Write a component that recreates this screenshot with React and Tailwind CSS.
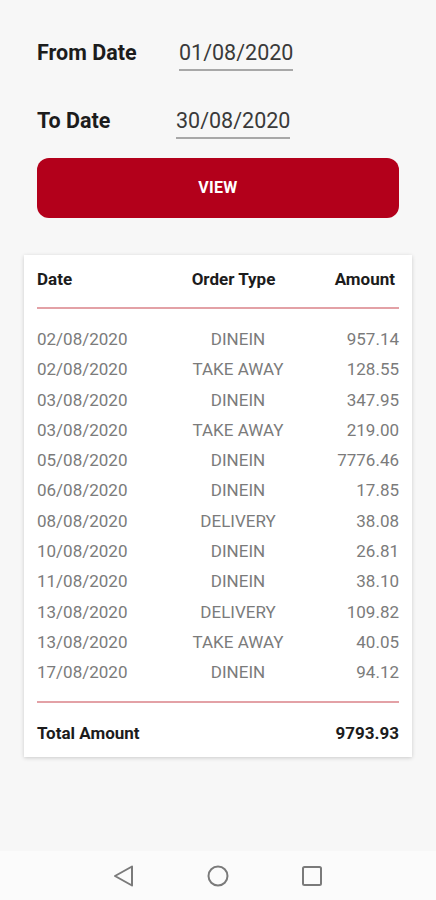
import React from "react";

const rows = [
  { date: "02/08/2020", type: "DINEIN", amount: "957.14" },
  { date: "02/08/2020", type: "TAKE AWAY", amount: "128.55" },
  { date: "03/08/2020", type: "DINEIN", amount: "347.95" },
  { date: "03/08/2020", type: "TAKE AWAY", amount: "219.00" },
  { date: "05/08/2020", type: "DINEIN", amount: "7776.46" },
  { date: "06/08/2020", type: "DINEIN", amount: "17.85" },
  { date: "08/08/2020", type: "DELIVERY", amount: "38.08" },
  { date: "10/08/2020", type: "DINEIN", amount: "26.81" },
  { date: "11/08/2020", type: "DINEIN", amount: "38.10" },
  { date: "13/08/2020", type: "DELIVERY", amount: "109.82" },
  { date: "13/08/2020", type: "TAKE AWAY", amount: "40.05" },
  { date: "17/08/2020", type: "DINEIN", amount: "94.12" },
];

const DateRow = ({ label, value, labelWidth, className }) => (
  <div className={`flex items-baseline ${className}`}>
    <span className={`${labelWidth} text-[21.5px] font-bold text-[#1c1c1c] leading-[26px]`}>{label}</span>
    <span className="text-[21.5px] text-[#3a3a3a] leading-[26px] pb-[3px] border-b-2 border-[#a8a8a8]">
      {value}
    </span>
  </div>
);

const App = () => {
  return (
    <div className="w-full min-h-[900px] bg-[#f7f7f7] flex flex-col font-['Roboto',sans-serif]">
      <div className="flex-1">
        <div className="px-[37px]">
          <DateRow label="From Date" value="01/08/2020" labelWidth="w-[142px]" className="pt-[40px]" />
          <DateRow label="To Date" value="30/08/2020" labelWidth="w-[139px]" className="mt-[37px]" />

          <button className="mt-[19px] w-full h-[60px] rounded-[12px] bg-[#b3001b] text-white text-[16px] font-bold tracking-[0.3px]">
            VIEW
          </button>
        </div>

        <div className="mx-[24px] mt-[37px] bg-white shadow-[0_1px_4px_rgba(0,0,0,0.18)] px-[13px] pt-[14px] pb-[14px]">
          <div className="grid grid-cols-[130px_1fr_90px] text-[17px] font-bold text-[#1c1c1c] leading-[20px]">
            <span>Date</span>
            <span className="text-center pr-[9px]">Order Type</span>
            <span className="text-right pr-[4px]">Amount</span>
          </div>

          <div className="mt-[18px] h-[2px] bg-[#e3a1a6]"></div>

          <div className="mt-[15px]">
            {rows.map((row, index) => (
              <div
                key={index}
                className="grid grid-cols-[130px_1fr_90px] text-[17px] text-[#7b7b7b] leading-[30.3px]"
              >
                <span>{row.date}</span>
                <span className="text-center">{row.type}</span>
                <span className="text-right">{row.amount}</span>
              </div>
            ))}
          </div>

          <div className="mt-[13px] h-[2px] bg-[#e3a1a6]"></div>

          <div className="mt-[20px] flex justify-between text-[17px] font-bold text-[#1c1c1c] leading-[20px]">
            <span>Total Amount</span>
            <span>9793.93</span>
          </div>
        </div>
      </div>

      <div className="h-[49px] bg-[#fbfbfb] flex items-center justify-center gap-[71px]">
        <svg width="22" height="22" viewBox="0 0 22 22" fill="none" stroke="#7a7a7a" strokeWidth="2" strokeLinejoin="round">
          <path d="M19 1.5 L2 11 L19 20.5 Z" />
        </svg>
        <svg width="24" height="24" viewBox="0 0 24 24" fill="none" stroke="#7a7a7a" strokeWidth="2">
          <circle cx="12" cy="12" r="9.5" />
        </svg>
        <svg width="22" height="22" viewBox="0 0 22 22" fill="none" stroke="#7a7a7a" strokeWidth="2" strokeLinejoin="round">
          <rect x="2" y="2" width="18" height="18" rx="1.5" />
        </svg>
      </div>
    </div>
  );
};

export default App;
